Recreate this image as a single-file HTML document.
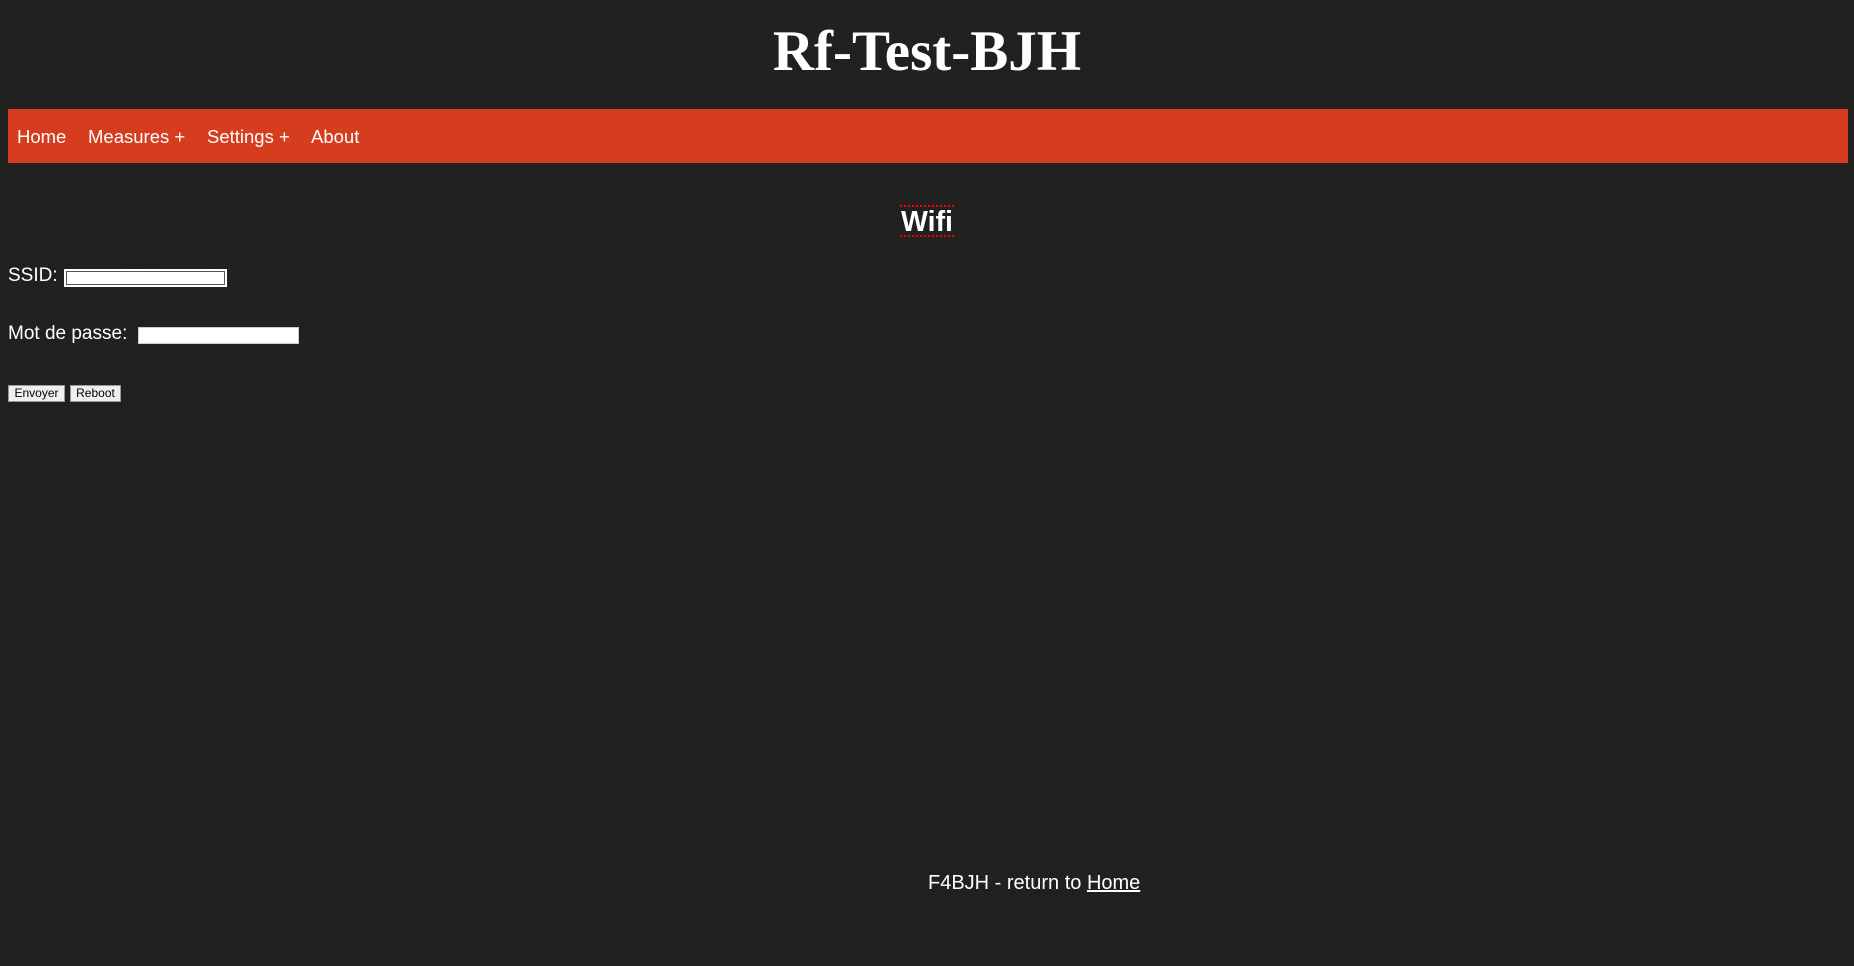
<!DOCTYPE html>
<html><head><meta charset="utf-8"><style>
html,body{margin:0;padding:0}
body{width:1854px;height:966px;background:#1f1f1f;background-image:repeating-linear-gradient(45deg,rgba(255,255,255,0.02) 0 1px,transparent 1px 3px);font-family:"Liberation Sans",sans-serif;color:#fff;position:relative;overflow:hidden}
.t{position:absolute;left:0;width:1854px;top:15px;text-align:center;font-family:"Liberation Serif",serif;font-weight:bold;font-size:57px;line-height:74px;color:#fff}
.nav{position:absolute;left:8px;top:109px;width:1840px;height:54px;background:#d63c1e}
.nav span{position:absolute;top:1px;line-height:54px;font-size:18.5px;color:#fff}
.w{position:absolute;left:900px;top:205px;height:28px;border-top:2px dotted #e00;border-bottom:2px dotted #e00;font-weight:bold;font-size:28.5px;line-height:30px;padding:0 1px}
.l{position:absolute;left:8px;font-size:19px}
.in{position:absolute;background:#fff;box-sizing:border-box}
.b{position:absolute;top:385px;height:17px;background:#efefef;border:1px solid #999;box-sizing:border-box;color:#000;font-size:12px;line-height:15px;text-align:center}
.f{position:absolute;left:928px;top:872px;font-size:20px}
.f u{color:#fff}
</style></head><body>
<div class="t">Rf-Test-BJH</div>
<div class="nav"><span style="left:9px">Home</span><span style="left:80px">Measures +</span><span style="left:199px">Settings +</span><span style="left:303px">About</span></div>
<div class="w">Wifi</div>
<div class="l" style="top:265px">SSID:</div>
<div class="in" style="left:64px;top:269px;width:163px;height:18px;border:2px solid #fff;outline:1px solid #555;outline-offset:-3px"></div>
<div class="l" style="top:323px">Mot de passe:</div>
<div class="in" style="left:138px;top:327px;width:161px;height:17px;border:1px solid #ccc"></div>
<div class="b" style="left:8px;width:57px">Envoyer</div>
<div class="b" style="left:70px;width:51px">Reboot</div>
<div class="f">F4BJH - return to <u>Home</u></div>
</body></html>
